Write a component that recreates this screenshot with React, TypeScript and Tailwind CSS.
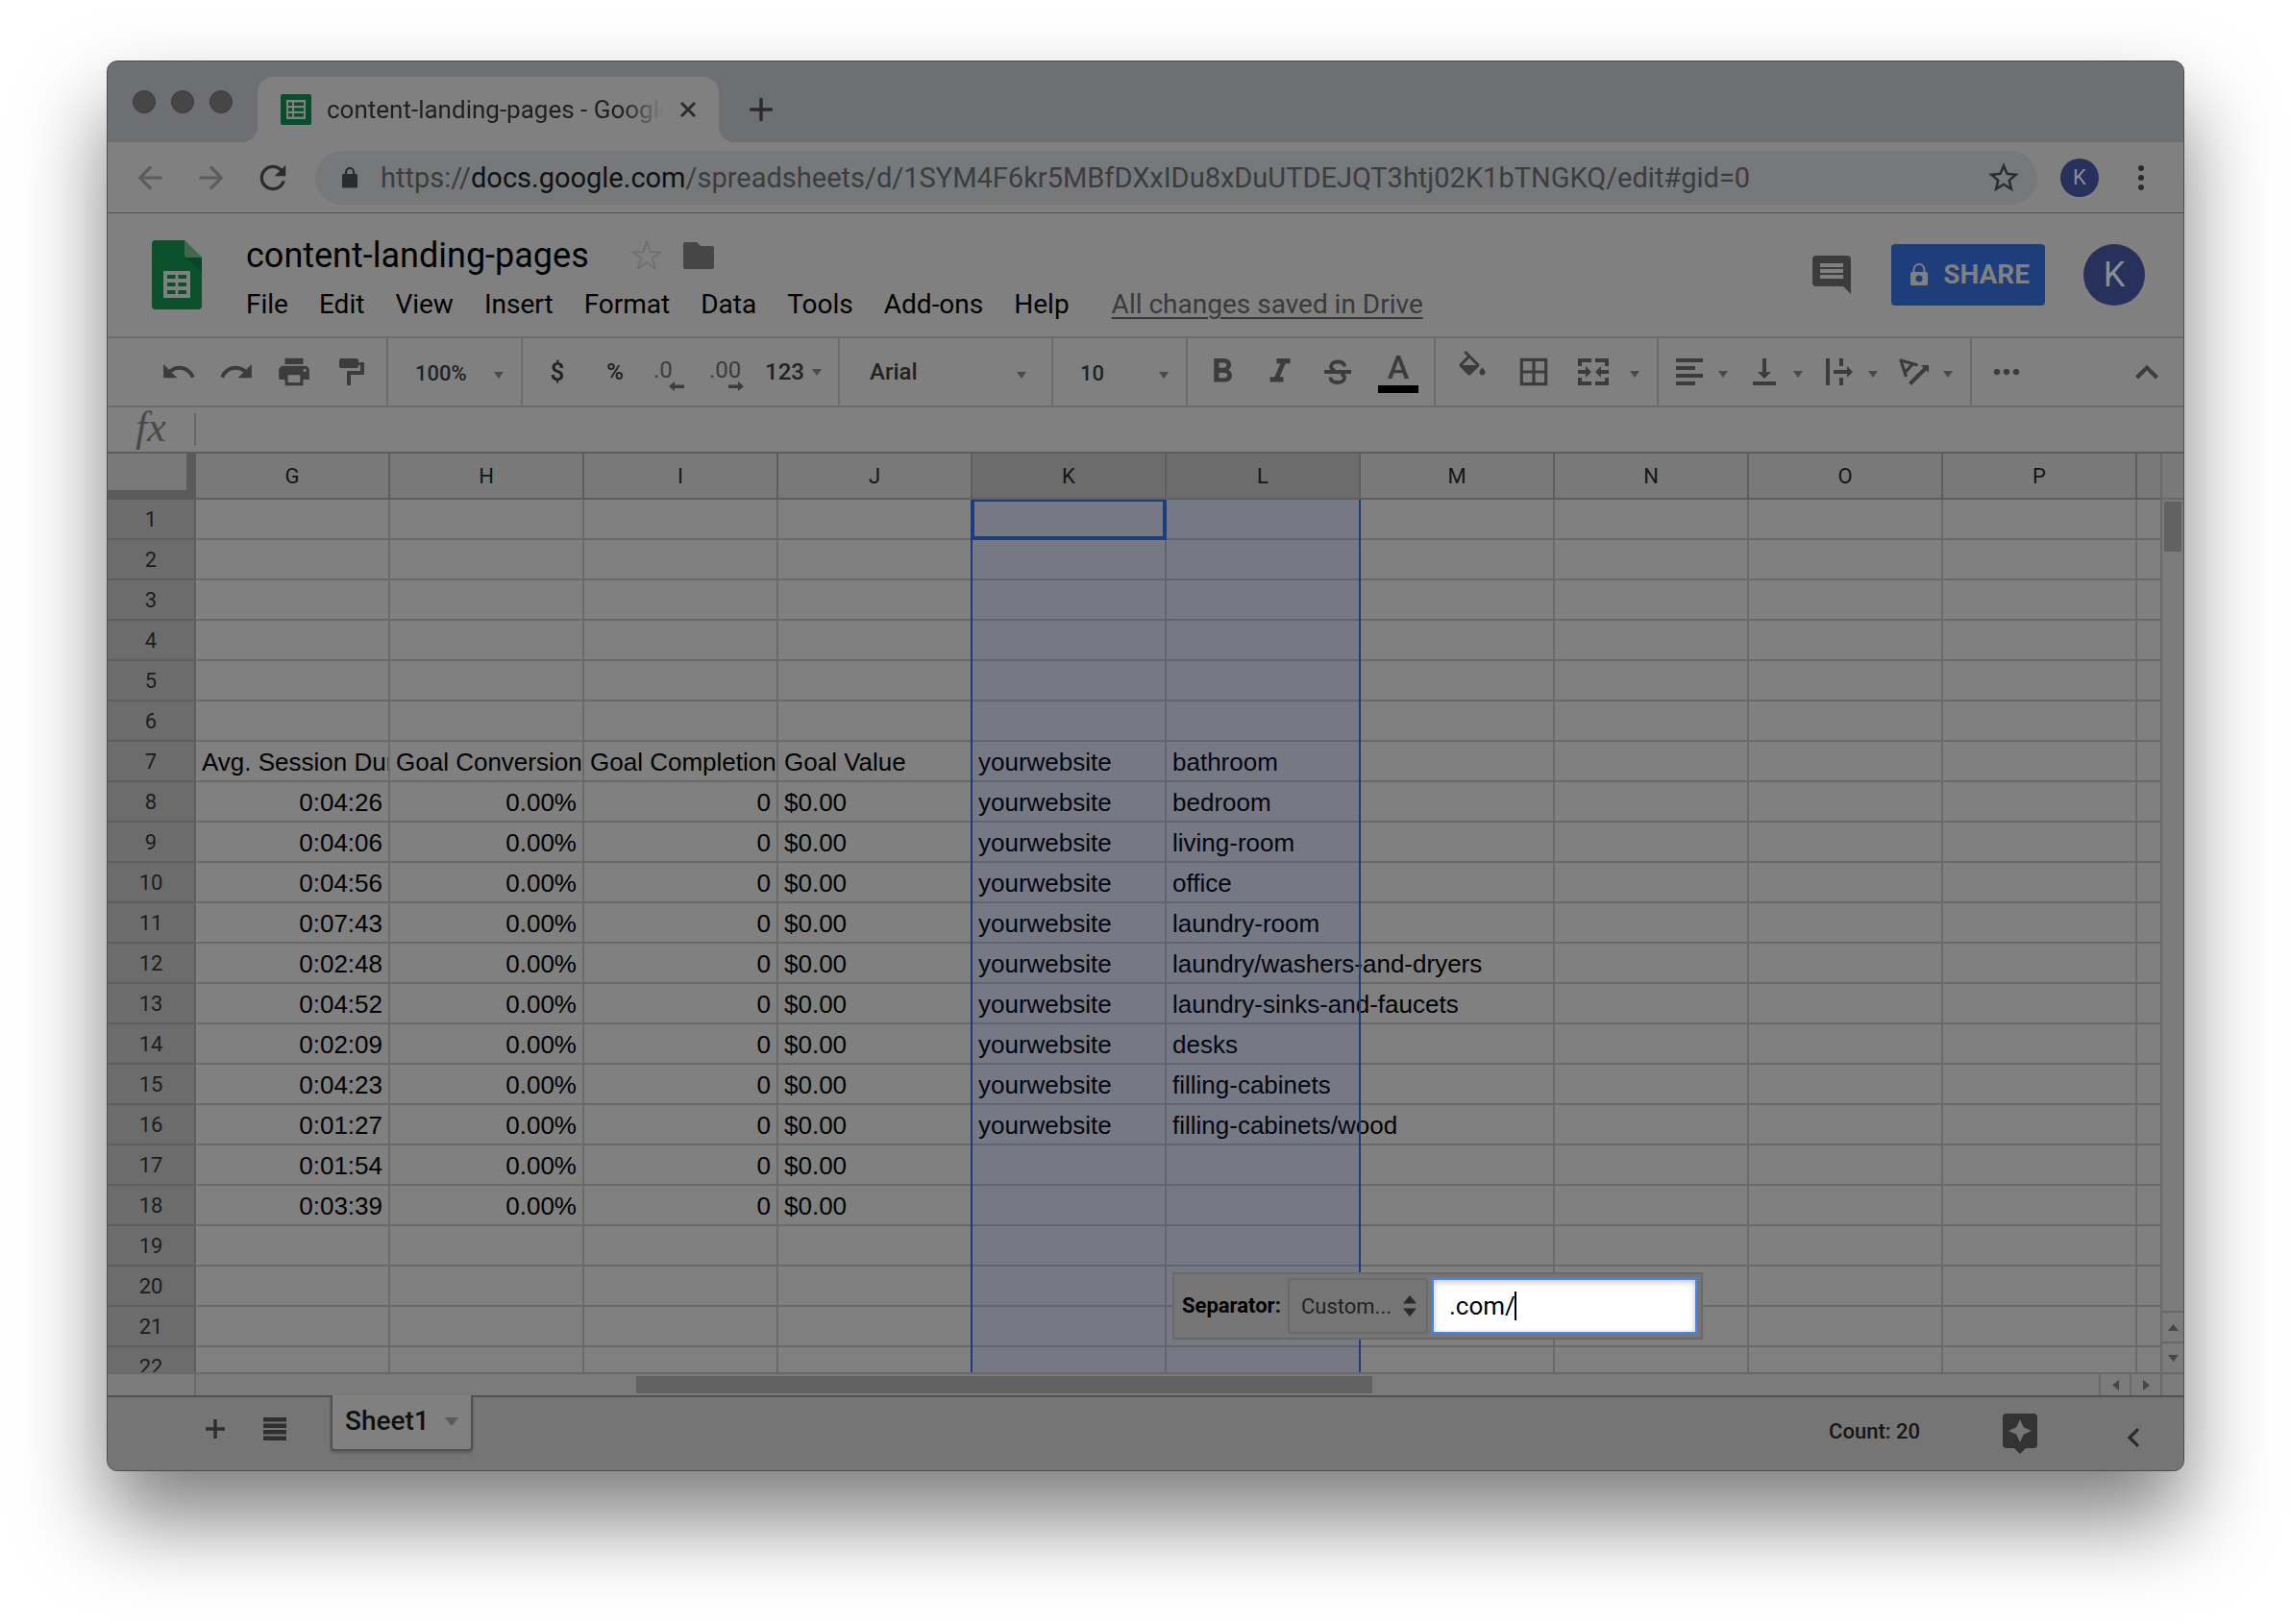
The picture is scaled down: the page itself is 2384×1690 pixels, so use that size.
import React from "react";
import {
  MdUndo,
  MdRedo,
  MdPrint,
  MdFormatBold,
  MdFormatItalic,
  MdBorderAll,
  MdMoreHoriz,
  MdStarBorder,
  MdArrowBack,
  MdArrowForward,
  MdRefresh,
} from "react-icons/md";

const columns = ["G", "H", "I", "J", "K", "L", "M", "N", "O", "P"];
const menus = ["File", "Edit", "View", "Insert", "Format", "Data", "Tools", "Add-ons", "Help"];

const rows: Record<number, string[]> = {
  7: ["Avg. Session Duration", "Goal Conversion Rate", "Goal Completions", "Goal Value", "yourwebsite", "bathroom"],
  8: ["0:04:26", "0.00%", "0", "$0.00", "yourwebsite", "bedroom"],
  9: ["0:04:06", "0.00%", "0", "$0.00", "yourwebsite", "living-room"],
  10: ["0:04:56", "0.00%", "0", "$0.00", "yourwebsite", "office"],
  11: ["0:07:43", "0.00%", "0", "$0.00", "yourwebsite", "laundry-room"],
  12: ["0:02:48", "0.00%", "0", "$0.00", "yourwebsite", "laundry/washers-and-dryers"],
  13: ["0:04:52", "0.00%", "0", "$0.00", "yourwebsite", "laundry-sinks-and-faucets"],
  14: ["0:02:09", "0.00%", "0", "$0.00", "yourwebsite", "desks"],
  15: ["0:04:23", "0.00%", "0", "$0.00", "yourwebsite", "filling-cabinets"],
  16: ["0:01:27", "0.00%", "0", "$0.00", "yourwebsite", "filling-cabinets/wood"],
  17: ["0:01:54", "0.00%", "0", "$0.00"],
  18: ["0:03:39", "0.00%", "0", "$0.00"],
};

const rowNumbers = Array.from({ length: 22 }, (_, i) => i + 1);

function Caret() {
  return (
    <svg className="h-[7px] w-[10px]" viewBox="0 0 10 7" fill="#4a4a4a" aria-hidden="true">
      <path d="M0 0h10L5 7z" />
    </svg>
  );
}

function ToolButton({ label, width = "w-[60px]", children }: { label: string; width?: string; children: React.ReactNode }) {
  return (
    <button type="button" aria-label={label} className={`flex h-full shrink-0 items-center justify-center ${width}`}>
      {children}
    </button>
  );
}

function MenuCaret({ label }: { label: string }) {
  return (
    <button type="button" aria-label={label} className="flex h-full w-[26px] shrink-0 items-center justify-center pt-1">
      <Caret />
    </button>
  );
}

function ToolSelect({ label, value, text }: { label: string; value: string; text: string }) {
  return (
    <div className="relative flex h-full w-full items-center">
      <select aria-label={label} className={`h-full w-full appearance-none bg-transparent font-medium text-[#222222] outline-none ${text}`}>
        <option>{value}</option>
      </select>
      <span className="pointer-events-none absolute right-[18px] top-[35px]">
        <Caret />
      </span>
    </div>
  );
}

function TitleBar() {
  return (
    <div className="flex h-[84px] shrink-0 items-end bg-[#6e6f73]">
      <div className="flex h-full w-[156px] items-center gap-4 pl-[26px]">
        {["Close", "Minimize", "Zoom"].map((name) => (
          <button key={name} type="button" aria-label={name} className="size-6 rounded-full border border-[#3a3a3a] bg-[#464646]" />
        ))}
      </div>
      <div className="relative flex h-[68px] w-[480px] items-center rounded-t-2xl bg-[#808080] px-6">
        <svg className="absolute -left-4 bottom-0 size-4" viewBox="0 0 16 16" fill="#808080" aria-hidden="true">
          <path d="M16 0v16H0A16 16 0 0 0 16 0z" />
        </svg>
        <svg className="absolute -right-4 bottom-0 size-4" viewBox="0 0 16 16" fill="#808080" aria-hidden="true">
          <path d="M0 0v16h16A16 16 0 0 1 0 0z" />
        </svg>
        <svg className="size-8 shrink-0" viewBox="0 0 32 32" aria-hidden="true">
          <rect width="32" height="32" rx="2" fill="#074f2a" />
          <path d="M6 6h20v20H6z" fill="#808080" />
          <path d="M8 8.500h4v3.500H8zM14 8.500h10v3.500H14zM8 14.200h4v3.500H8zM14 14.200h10v3.500H14zM8 20h4v3.500H8zM14 20h10v3.500H14z" fill="#074f2a" />
        </svg>
        <div className="ml-4 w-[350px] overflow-hidden whitespace-nowrap bg-gradient-to-r from-[#1f1f21] from-88% to-transparent bg-clip-text text-[26px] leading-8 text-transparent">
          content-landing-pages - Google Sheets
        </div>
        <button type="button" aria-label="Close tab" className="ml-[18px] shrink-0">
          <svg className="size-4" viewBox="0 0 16 16" stroke="#2b2b2d" strokeWidth="3" aria-hidden="true">
            <path d="M1 1l14 14M15 1L1 15" />
          </svg>
        </button>
      </div>
      <button type="button" aria-label="New tab" className="mb-[22px] ml-8">
        <svg className="size-6" viewBox="0 0 24 24" stroke="#2b2b2d" strokeWidth="3.500" strokeLinecap="round" aria-hidden="true">
          <path d="M12 1.500v21M1.500 12h21" />
        </svg>
      </button>
    </div>
  );
}

function AddressBar() {
  return (
    <div className="flex h-[74px] shrink-0 items-center border-b border-[#525252] bg-[#808080] px-3">
      <button type="button" aria-label="Back" className="flex w-16 justify-center">
        <MdArrowBack size={38} color="#5b5c5d" />
      </button>
      <button type="button" aria-label="Forward" className="flex w-16 justify-center">
        <MdArrowForward size={38} color="#5b5c5d" />
      </button>
      <button type="button" aria-label="Reload" className="flex w-16 justify-center">
        <MdRefresh size={40} color="#2b2c2e" />
      </button>
      <div className="ml-3 flex h-14 flex-1 items-center rounded-full bg-[#76787a] pl-7 pr-4">
        <svg className="h-[22px] w-4 shrink-0" viewBox="0 0 16 22" aria-hidden="true">
          <rect y="7" width="16" height="14.500" rx="1.500" fill="#2b2c2e" />
          <path d="M4 8V5a4 4 0 0 1 8 0v3" fill="none" stroke="#2b2c2e" strokeWidth="2.200" />
        </svg>
        <div role="textbox" aria-label="Address" className="ml-6 flex-1 overflow-hidden whitespace-nowrap text-[29px] leading-9 text-[#3a3d40]">
          https://<span className="text-[#101112]">docs.google.com</span>/spreadsheets/d/1SYM4F6kr5MBfDXxIDu8xDuUTDEJQT3htj02K1bTNGKQ/edit#gid=0
        </div>
        <button type="button" aria-label="Bookmark this page">
          <MdStarBorder size={38} color="#2b2c2e" />
        </button>
      </div>
      <button type="button" aria-label="Profile" className="ml-6 flex size-10 items-center justify-center rounded-full bg-[#28305c] text-[22px] leading-6 text-[#8a8c9c]">
        K
      </button>
      <button type="button" aria-label="Browser menu" className="ml-7 flex w-12 flex-col items-center gap-1 pr-4">
        <span className="size-[6px] rounded-full bg-[#2b2c2e]" />
        <span className="size-[6px] rounded-full bg-[#2b2c2e]" />
        <span className="size-[6px] rounded-full bg-[#2b2c2e]" />
      </button>
    </div>
  );
}

function DocHeader() {
  return (
    <header className="flex h-[128px] shrink-0 items-start bg-[#808080] pl-[46px] pr-10">
      <svg className="mt-7 h-[72px] w-[52px] shrink-0" viewBox="0 0 52 72" aria-hidden="true">
        <path d="M4 0h30l18 18v50a4 4 0 0 1-4 4H4a4 4 0 0 1-4-4V4a4 4 0 0 1 4-4z" fill="#0b512c" />
        <path d="M35 17l17 17V18z" fill="#094526" />
        <path d="M34 0l18 18H37a3 3 0 0 1-3-3z" fill="#42694f" />
        <path d="M12 32h28v28H12z" fill="#808080" />
        <path d="M16 36h8.500v4H16zM27.500 36H36v4h-8.500zM16 44h8.500v4H16zM27.500 44H36v4h-8.500zM16 52h8.500v4H16zM27.500 52H36v4h-8.500z" fill="#0b512c" />
      </svg>
      <div className="ml-[46px] flex flex-1 flex-col pt-[22px]">
        <div className="flex h-11 items-center">
          <h1 className="text-[36px] leading-[44px] text-black">content-landing-pages</h1>
          <button type="button" aria-label="Star" className="ml-[44px]">
            <svg className="size-8" viewBox="0 0 32 32" fill="none" stroke="#6a6a6a" strokeWidth="1.300" aria-hidden="true">
              <path d="M16 1.500l3.600 10.800H30.500l-8.700 6.500 3.200 10.700-9-6.500-9 6.500 3.200-10.700-8.700-6.500h10.900z" />
            </svg>
          </button>
          <button type="button" aria-label="Move to folder" className="ml-[22px]">
            <svg className="h-7 w-8" viewBox="0 0 32 28" fill="#464646" aria-hidden="true">
              <path d="M2 0h12l4 4h12a2 2 0 0 1 2 2v20a2 2 0 0 1-2 2H2a2 2 0 0 1-2-2V2a2 2 0 0 1 2-2z" />
            </svg>
          </button>
        </div>
        <nav className="mt-[11px] flex items-center gap-8 text-[28px] leading-9 text-black">
          {menus.map((name) => (
            <button key={name} type="button">
              {name}
            </button>
          ))}
          <a href="#saved" className="ml-3 text-[#3a3a3a] underline decoration-2 underline-offset-4">
            All changes saved in Drive
          </a>
        </nav>
      </div>
      <div className="flex h-16 items-center pt-8 box-content">
        <button type="button" aria-label="Comments">
          <svg className="size-10" viewBox="0 0 40 40" aria-hidden="true">
            <path d="M4 0h32a4 4 0 0 1 4 4v36l-8-8H4a4 4 0 0 1-4-4V4a4 4 0 0 1 4-4z" fill="#3c3c3c" />
            <path d="M8 8h24v4H8zM8 14h24v4H8zM8 20h24v4H8z" fill="#808080" />
          </svg>
        </button>
        <button type="button" className="ml-[42px] flex h-16 w-40 items-center justify-between rounded bg-[#1d3d7b] pl-5 pr-4 text-[28px] font-bold leading-9 text-[#808080]">
          <svg className="h-6 w-[18px]" viewBox="0 0 18 24" aria-hidden="true">
            <path d="M3.500 10V6.500a5.500 5.500 0 0 1 11 0V10" fill="none" stroke="#808080" strokeWidth="2" />
            <path fillRule="evenodd" d="M1.500 9h15A1.500 1.500 0 0 1 18 10.500v11a1.500 1.500 0 0 1-1.500 1.500h-15A1.500 1.500 0 0 1 0 21.500v-11A1.500 1.500 0 0 1 1.500 9zM9 12.500a3.500 3.500 0 1 0 0 7 3.500 3.500 0 0 0 0-7z" fill="#808080" />
          </svg>
          SHARE
        </button>
        <button type="button" aria-label="Account" className="ml-10 flex size-16 items-center justify-center rounded-full bg-[#28305c] text-[36px] leading-10 text-[#8a8c98]">
          K
        </button>
      </div>
    </header>
  );
}

const group = "flex h-full shrink-0 items-center border-r-2 border-[#6c6c6c]";

function Toolbar() {
  return (
    <div role="toolbar" aria-label="Formatting" className="flex h-[74px] shrink-0 items-center overflow-hidden border-y-2 border-[#6c6c6c] bg-[#808080] text-[#3c3c3c]">
      <div className={`${group} w-[292px] pl-[44px]`}>
        <ToolButton label="Undo"><MdUndo size={38} /></ToolButton>
        <ToolButton label="Redo"><MdRedo size={38} /></ToolButton>
        <ToolButton label="Print"><MdPrint size={38} /></ToolButton>
        <ToolButton label="Paint format">
          <svg className="size-7" viewBox="0 0 28 28" fill="#3c3c3c" aria-hidden="true">
            <rect x="1" width="20" height="10" rx="2" />
            <path d="M19 4h8v13H13v11H9V13h14V7h-4z" />
          </svg>
        </ToolButton>
      </div>
      <div className={`${group} w-[140px] pl-7`}>
        <ToolSelect label="Zoom" value="100%" text="text-[22px] pt-[2px]" />
      </div>
      <div className={`${group} w-[330px] pl-[6px]`}>
        <ToolButton label="Format as currency"><span className="text-[26px] font-medium leading-8 text-[#222222]">$</span></ToolButton>
        <ToolButton label="Format as percent"><span className="text-[24px] font-medium leading-8 text-[#222222]">%</span></ToolButton>
        <ToolButton label="Decrease decimal places">
          <span className="flex flex-col items-start pr-2 pt-[6px] text-[24px] leading-6">
            .0
            <svg className="ml-4 h-[10px] w-4" viewBox="0 0 16 10" fill="#3c3c3c" aria-hidden="true">
              <path d="M0 5l6-5v3.500h10v3.500H6V10z" />
            </svg>
          </span>
        </ToolButton>
        <ToolButton label="Increase decimal places">
          <span className="flex flex-col items-start pr-2 pt-[6px] text-[24px] leading-6">
            .00
            <svg className="ml-5 h-[10px] w-4" viewBox="0 0 16 10" fill="#3c3c3c" aria-hidden="true">
              <path d="M16 5l-6-5v3.500H0v3.500h10V10z" />
            </svg>
          </span>
        </ToolButton>
        <button type="button" className="ml-[6px] flex items-center gap-2 text-[24px] font-medium leading-8 text-[#222222]">
          123 <Caret />
        </button>
      </div>
      <div className={`${group} w-[222px] pl-[31px] pr-2`}>
        <ToolSelect label="Font" value="Arial" text="text-[24px]" />
      </div>
      <div className={`${group} w-[140px] pl-7`}>
        <ToolSelect label="Font size" value="10" text="text-[22px] pt-[2px]" />
      </div>
      <div className={`${group} w-[258px] pl-[6px]`}>
        <ToolButton label="Bold"><MdFormatBold size={42} /></ToolButton>
        <ToolButton label="Italic"><MdFormatItalic size={42} /></ToolButton>
        <ToolButton label="Strikethrough">
          <svg className="size-7" viewBox="0 0 28 28" aria-hidden="true">
            <path d="M21 8.500C21 4.800 18 3.500 14 3.500S7 5.200 7 8.300c0 2.200 1.500 3.500 4 4.500M17.500 16c2.400.9 3.500 2.300 3.500 4.200 0 3-3 4.800-7 4.800s-7.500-1.500-7.500-5.500" fill="none" stroke="#3c3c3c" strokeWidth="3.800" />
            <path d="M0 12h28v4H0z" fill="#3c3c3c" />
          </svg>
        </ToolButton>
        <ToolButton label="Text color" width="w-[66px]">
          <span className="flex flex-col items-center pb-[2px] text-[34px] font-medium leading-[38px] text-[#3c3c3c]">
            A
            <span className="h-2 w-[42px] bg-black" />
          </span>
        </ToolButton>
      </div>
      <div className={`${group} w-[232px] pl-[6px]`}>
        <ToolButton label="Fill color" width="w-16">
          <svg className="mb-2 size-9" viewBox="0 0 24 24" fill="#3c3c3c" aria-hidden="true">
            <path d="M16.560 8.940L7.620 0 6.210 1.410l2.380 2.380-5.150 5.150c-.59.59-.59 1.540 0 2.120l5.500 5.500c.29.29.68.44 1.060.44s.77-.15 1.060-.44l5.500-5.500c.59-.58.59-1.530 0-2.120zM5.210 10L10 5.210 14.790 10H5.210zM19 11.500s-2 2.170-2 3.500c0 1.100.9 2 2 2s2-.9 2-2c0-1.330-2-3.500-2-3.500z" />
          </svg>
        </ToolButton>
        <ToolButton label="Borders" width="w-16"><MdBorderAll size={38} /></ToolButton>
        <ToolButton label="Merge cells">
          <svg className="h-7 w-8" viewBox="0 0 32 28" fill="#3c3c3c" aria-hidden="true">
            <path d="M0 0h14v4H4v4H0zM18 0h14v8h-4V4H18zM0 20h4v4h10v4H0zM28 20h4v8H18v-4h10zM0 12h8V8l6 6-6 6v-4H0zM32 12h-8V8l-6 6 6 6v-4h8z" />
          </svg>
        </ToolButton>
        <MenuCaret label="Merge options" />
      </div>
      <div className={`${group} w-[326px] gap-2 pl-[10px]`}>
        <div className="flex h-full">
          <ToolButton label="Horizontal align" width="w-11">
            <svg className="size-7" viewBox="0 0 28 28" fill="#3c3c3c" aria-hidden="true">
              <path d="M0 0h28v4H0zM0 8h20v4H0zM0 16h28v4H0zM0 24h20v4H0z" />
            </svg>
          </ToolButton>
          <MenuCaret label="Horizontal align options" />
        </div>
        <div className="flex h-full">
          <ToolButton label="Vertical align" width="w-11">
            <svg className="h-7 w-6" viewBox="0 0 24 28" fill="#3c3c3c" aria-hidden="true">
              <path d="M0 24h24v4H0zM10 0h4v14h5l-7 7-7-7h5z" />
            </svg>
          </ToolButton>
          <MenuCaret label="Vertical align options" />
        </div>
        <div className="flex h-full">
          <ToolButton label="Text wrapping" width="w-11">
            <svg className="size-7" viewBox="0 0 28 28" fill="#3c3c3c" aria-hidden="true">
              <path d="M0 0h4v28H0zM14 0h4v8h-4zM14 20h4v8h-4zM8 12h14V8l6 6-6 6v-4H8z" />
            </svg>
          </ToolButton>
          <MenuCaret label="Text wrapping options" />
        </div>
        <div className="flex h-full">
          <ToolButton label="Text rotation" width="w-11">
            <svg className="h-7 w-8" viewBox="0 0 32 28" fill="none" stroke="#3c3c3c" aria-hidden="true">
              <path d="M7.500 19L2 2l17.500 5M6.500 14.500L14 6" strokeWidth="3.200" strokeLinejoin="round" />
              <path d="M11.500 26.500L28 10" strokeWidth="4" />
              <path d="M23 7h8v8z" fill="#3c3c3c" stroke="none" />
            </svg>
          </ToolButton>
          <MenuCaret label="Text rotation options" />
        </div>
      </div>
      <div className="flex h-full flex-1 items-center justify-between pl-[6px] pr-2">
        <ToolButton label="More"><MdMoreHoriz size={40} /></ToolButton>
        <ToolButton label="Hide menus">
          <svg className="h-4 w-6" viewBox="0 0 24 16" fill="none" stroke="#3c3c3c" strokeWidth="4" aria-hidden="true">
            <path d="M1.500 14L12 3.500 22.500 14" />
          </svg>
        </ToolButton>
      </div>
    </div>
  );
}

function FormulaBar() {
  return (
    <div className="flex h-[46px] shrink-0 items-center bg-[#808080]">
      <label htmlFor="formula" className="w-[90px] pb-1 text-center font-['Liberation_Serif',serif] text-[44px] italic leading-[42px] text-[#4a4a4a]">
        fx
      </label>
      <span className="h-[34px] w-[2px] bg-[#666666]" />
      <input id="formula" type="text" className="h-full flex-1 bg-transparent px-3 text-[26px] text-black outline-none" />
    </div>
  );
}

function cellStyle(col: number, row: number) {
  const align = col < 3 && row > 7 ? "text-right" : "text-left";
  const clip = col === 5 ? "overflow-visible" : "overflow-hidden";
  return `${align} ${clip}`;
}

function Grid() {
  return (
    <div className="relative min-w-0 flex-1 overflow-hidden bg-[#808080]">
      <table className="w-full table-fixed border-separate border-spacing-0">
        <colgroup>
          <col className="w-[92px]" />
          {columns.map((c) => (
            <col key={c} className="w-[202px]" />
          ))}
          <col />
        </colgroup>
        <thead>
          <tr className="h-[48px] text-[22px] text-[#151515]">
            <th className="border-b-[10px] border-r-[10px] border-[#5b5b5b] bg-[#797979] p-0" aria-label="Select all" />
            {columns.map((c) => (
              <th
                key={c}
                scope="col"
                className={`border-b-2 border-r-2 border-[#5e5e5e] p-0 text-center font-normal ${c === "K" || c === "L" ? "bg-[#6c6c6c]" : "bg-[#797979]"}`}
              >
                {c}
              </th>
            ))}
            <td className="border-b-2 border-[#5e5e5e] bg-[#797979] p-0" />
          </tr>
        </thead>
        <tbody>
          {rowNumbers.map((n) => (
            <tr key={n} className="h-[42px]">
              <th scope="row" className="border-b-2 border-r-2 border-[#5e5e5e] bg-[#6c6c6c] p-0 pt-[2px] text-center text-[22px] font-normal leading-[38px] text-[#1c1c1c]">
                {n}
              </th>
              {columns.map((c, i) => (
                <td
                  key={c}
                  className={`whitespace-nowrap border-b-2 border-r-2 border-[#6a6a6a] px-[6px] pb-0 pt-[2px] font-['Liberation_Sans',sans-serif] text-[26px] leading-[38px] text-black ${cellStyle(i, n)}`}
                >
                  {rows[n]?.[i] ?? ""}
                </td>
              ))}
              <td className="border-b-2 border-[#6a6a6a] p-0" />
            </tr>
          ))}
        </tbody>
      </table>

      {/* Selected range K:L with its active cell */}
      <div className="pointer-events-none absolute bottom-0 left-[898px] top-[48px] w-[406px] border-x-2 border-[#1c3d7d] bg-[#1b3a99]/10">
        <div className="-ml-[2px] h-[42px] w-[204px] border-4 border-t-2 border-[#1c3d7d]" />
      </div>

      {/* Split-text separator popup */}
      <div className="absolute bottom-[34px] left-[1108px] flex h-[70px] w-[552px] items-center border-2 border-[#696969] bg-[#767676] pl-2 pr-1">
        <label htmlFor="separator" className="w-[102px] text-[22px] font-bold leading-7 text-black">
          Separator:
        </label>
        <div className="relative ml-2 h-[58px] w-[146px] shrink-0">
          <select id="separator" className="size-full appearance-none rounded border-2 border-[#6a6a6a] bg-[#757575] pl-3 text-[22px] text-[#222222] outline-none">
            <option>Custom...</option>
          </select>
          <svg className="pointer-events-none absolute right-3 top-[18px] h-[22px] w-[14px]" viewBox="0 0 14 22" fill="#2a2a2a" aria-hidden="true">
            <path d="M7 0l7 8.500H0zM7 22l7-8.500H0z" />
          </svg>
        </div>
        <div className="relative ml-1 h-[58px] flex-1">
          <input
            type="text"
            aria-label="Custom separator"
            defaultValue=".com/"
            className="size-full border-2 border-[#4285f4] bg-white pl-4 text-[26px] text-black shadow-[inset_0_2px_6px_rgba(0,0,0,0.25)] outline-none"
          />
          <span className="pointer-events-none absolute left-[86px] top-[14px] h-[30px] w-[2px] bg-black" />
        </div>
      </div>
    </div>
  );
}

function ScrollArrow({ label, path, className }: { label: string; path: string; className: string }) {
  return (
    <button type="button" aria-label={label} className={`flex shrink-0 items-center justify-center border-[#696969] ${className}`}>
      <svg className="size-[11px]" viewBox="0 0 11 11" fill="#474747" aria-hidden="true">
        <path d={path} />
      </svg>
    </button>
  );
}

function Sheet() {
  return (
    <div className="flex min-h-0 flex-1 flex-col border-t-2 border-[#5e5e5e]">
      <div className="flex min-h-0 flex-1">
        <Grid />
        <div className="flex w-6 shrink-0 flex-col border-l-2 border-[#696969] bg-[#7b7b7b]">
          <div className="h-12 shrink-0 border-b-2 border-[#696969] bg-[#797979]" />
          <div className="flex-1 p-[2px]">
            <div className="h-[52px] bg-[#626262]" />
          </div>
          <ScrollArrow label="Scroll up" path="M5.500 2L11 9H0z" className="h-8 border-t-2" />
          <ScrollArrow label="Scroll down" path="M5.500 9L11 2H0z" className="h-8 border-t-2" />
        </div>
      </div>
      <div className="flex h-6 shrink-0 border-t-2 border-[#696969] bg-[#7b7b7b]">
        <div className="w-[92px] shrink-0 border-r-2 border-[#696969]" />
        <div className="flex-1 py-[2px] pl-[458px]">
          <div className="h-full w-[766px] bg-[#626262]" />
        </div>
        <ScrollArrow label="Scroll left" path="M2 5.500L9 0v11z" className="w-8 border-l-2" />
        <ScrollArrow label="Scroll right" path="M9 5.500L2 0v11z" className="w-8 border-l-2" />
        <div className="w-6 shrink-0 border-l-2 border-[#696969]" />
      </div>
    </div>
  );
}

function BottomBar() {
  return (
    <footer className="flex h-[78px] shrink-0 items-start bg-[#757575]">
      <div className="flex h-full w-[232px] shrink-0 items-center gap-10 border-t-2 border-[#525252] pb-[10px] pl-[102px]">
        <button type="button" aria-label="Add sheet">
          <svg className="size-5" viewBox="0 0 20 20" stroke="#2f2f2f" strokeWidth="3.500" aria-hidden="true">
            <path d="M10 0v20M0 10h20" />
          </svg>
        </button>
        <button type="button" aria-label="All sheets">
          <svg className="size-6" viewBox="0 0 24 24" fill="#2f2f2f" aria-hidden="true">
            <path d="M0 0h24v4.500H0zM0 6.500h24V11H0zM0 13h24v4.500H0zM0 19.500h24V24H0z" />
          </svg>
        </button>
      </div>
      <button type="button" className="flex h-[58px] w-[148px] shrink-0 items-center rounded-b border-2 border-t-0 border-[#505050] bg-[#808080] pb-[2px] pl-[13px] text-[28px] font-medium leading-8 text-[#101010] shadow-[0_2px_3px_rgba(0,0,0,0.2)]">
        Sheet1
        <svg className="ml-4 h-[9px] w-[14px]" viewBox="0 0 14 9" fill="#5a5a5a" aria-hidden="true">
          <path d="M0 0h14L7 9z" />
        </svg>
      </button>
      <div className="flex h-full flex-1 items-center justify-end border-t-2 border-[#525252] pr-[45px]">
        <span className="pb-1 text-[22px] font-medium leading-7 text-[#161616]">Count: 20</span>
        <button type="button" aria-label="Explore" className="ml-[86px]">
          <svg className="h-[42px] w-9" viewBox="0 0 36 42" aria-hidden="true">
            <path d="M4 0h28a4 4 0 0 1 4 4v28a4 4 0 0 1-4 4h-8l-6 6-6-6H4a4 4 0 0 1-4-4V4a4 4 0 0 1 4-4z" fill="#333333" />
            <path d="M18 6l3.700 8.300L30 18l-8.300 3.700L18 30l-3.700-8.300L6 18l8.300-3.700z" fill="#757575" />
          </svg>
        </button>
        <button type="button" aria-label="Show side panel" className="ml-[93px] pt-2">
          <svg className="h-5 w-[14px]" viewBox="0 0 14 20" fill="none" stroke="#2a2a2a" strokeWidth="3.200" aria-hidden="true">
            <path d="M12 1.200L3 10l9 8.800" />
          </svg>
        </button>
      </div>
    </footer>
  );
}

export default function App() {
  return (
    <div className="flex h-screen flex-col overflow-hidden bg-white px-[111px] pb-[159px] pt-[63px] font-[Roboto,sans-serif]">
      <main className="flex min-h-0 flex-1 flex-col overflow-hidden rounded-[11px] border border-[#4c4c4e] bg-[#757575] shadow-[0_50px_88px_rgba(0,0,0,0.5)]">
        <TitleBar />
        <AddressBar />
        <DocHeader />
        <Toolbar />
        <FormulaBar />
        <Sheet />
        <BottomBar />
      </main>
    </div>
  );
}
